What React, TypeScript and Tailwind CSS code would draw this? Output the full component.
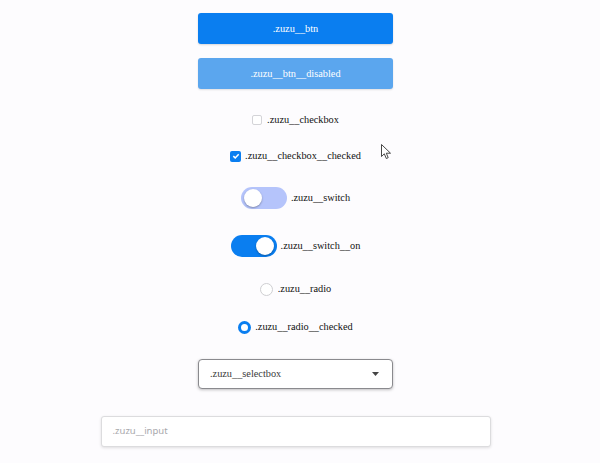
import React from "react";

export default function App() {
  return (
    <div className="relative w-[600px] h-[463px] bg-[#fdfcfe] overflow-hidden font-['Liberation_Serif','Times_New_Roman',serif]">
      <div className="w-[591px] flex flex-col items-center text-[10.3px] text-[#111]">
        <button className="mt-[13px] w-[195px] h-[31px] rounded-[3px] bg-[#0a7ef0] text-white font-['Liberation_Serif',serif] shadow-[0_1px_2px_rgba(0,0,0,0.15)]">
          .zuzu__btn
        </button>
        <button className="mt-[14px] w-[195px] h-[31px] rounded-[3px] bg-[#5ba6ee] text-white font-['Liberation_Serif',serif] shadow-[0_1px_2px_rgba(0,0,0,0.12)]">
          .zuzu__btn__disabled
        </button>

        <div className="mt-[21px] h-[20px] flex items-center gap-[5px]">
          <span className="w-[10px] h-[10px] rounded-[2px] border border-[#d4d4d8] bg-white" />
          <span>.zuzu__checkbox</span>
        </div>
        <div className="mt-[16px] h-[20px] flex items-center gap-[4px]">
          <span className="w-[11px] h-[11px] rounded-[2px] bg-[#0a7ef0] flex items-center justify-center">
            <svg width="8" height="8" viewBox="0 0 8 8">
              <path d="M1.3 4.1 L3.2 5.9 L6.7 2.2" fill="none" stroke="white" strokeWidth="1.5" />
            </svg>
          </span>
          <span>.zuzu__checkbox__checked</span>
        </div>

        <div className="mt-[21px] h-[22px] flex items-center gap-[4px]">
          <span className="w-[46px] h-[22px] rounded-full bg-[#b5c4fb] flex items-center px-[3px]">
            <span className="w-[18px] h-[18px] rounded-full bg-white shadow-[0_1px_2px_rgba(0,0,0,0.3)]" />
          </span>
          <span>.zuzu__switch</span>
        </div>
        <div className="mt-[26px] h-[22px] flex items-center gap-[4px]">
          <span className="w-[46px] h-[22px] rounded-full bg-[#0a7ef0] flex items-center justify-end px-[3px]">
            <span className="w-[18px] h-[18px] rounded-full bg-white shadow-[0_1px_2px_rgba(0,0,0,0.3)]" />
          </span>
          <span>.zuzu__switch__on</span>
        </div>

        <div className="mt-[22px] h-[20px] flex items-center gap-[5px]">
          <span className="w-[13px] h-[13px] rounded-full border-[1.5px] border-[#cfcfd2] bg-white" />
          <span>.zuzu__radio</span>
        </div>
        <div className="mt-[18px] h-[20px] flex items-center gap-[4px]">
          <span className="w-[13px] h-[13px] rounded-full border-[3.5px] border-[#0a7ef0] bg-white" />
          <span>.zuzu__radio__checked</span>
        </div>

        <div className="mt-[22px] w-[195px] h-[30px] rounded-[4px] border-[1.5px] border-[#8a8a8e] bg-white shadow-[0_1px_3px_rgba(0,0,0,0.25)] flex items-center justify-between pl-[11px] pr-[13px] text-[#3a3a3a]">
          <span>.zuzu__selectbox</span>
          <svg width="7" height="4" viewBox="0 0 7 4">
            <path d="M0 0 L7 0 L3.5 4 Z" fill="#444" />
          </svg>
        </div>

        <div className="mt-[27px] w-[390px] h-[31px] rounded-[3px] border border-[#dcdcde] bg-white shadow-[0_1px_3px_rgba(0,0,0,0.12)] flex items-center pl-[11px]">
          <span className="text-[9.5px] text-[#a8a8ac] font-['Noto_Sans','Open_Sans',sans-serif]">
            .zuzu__input
          </span>
        </div>
      </div>

      <svg className="absolute left-[381px] top-[144px]" width="11" height="16" viewBox="0 0 11 16">
        <path d="M0.5 0.5 L0.5 12.5 L3.3 9.8 L5.3 14.5 L7.2 13.7 L5.3 9.2 L9.5 9.2 Z" fill="white" stroke="#333" strokeWidth="0.9" strokeLinejoin="round" />
      </svg>
    </div>
  );
}
